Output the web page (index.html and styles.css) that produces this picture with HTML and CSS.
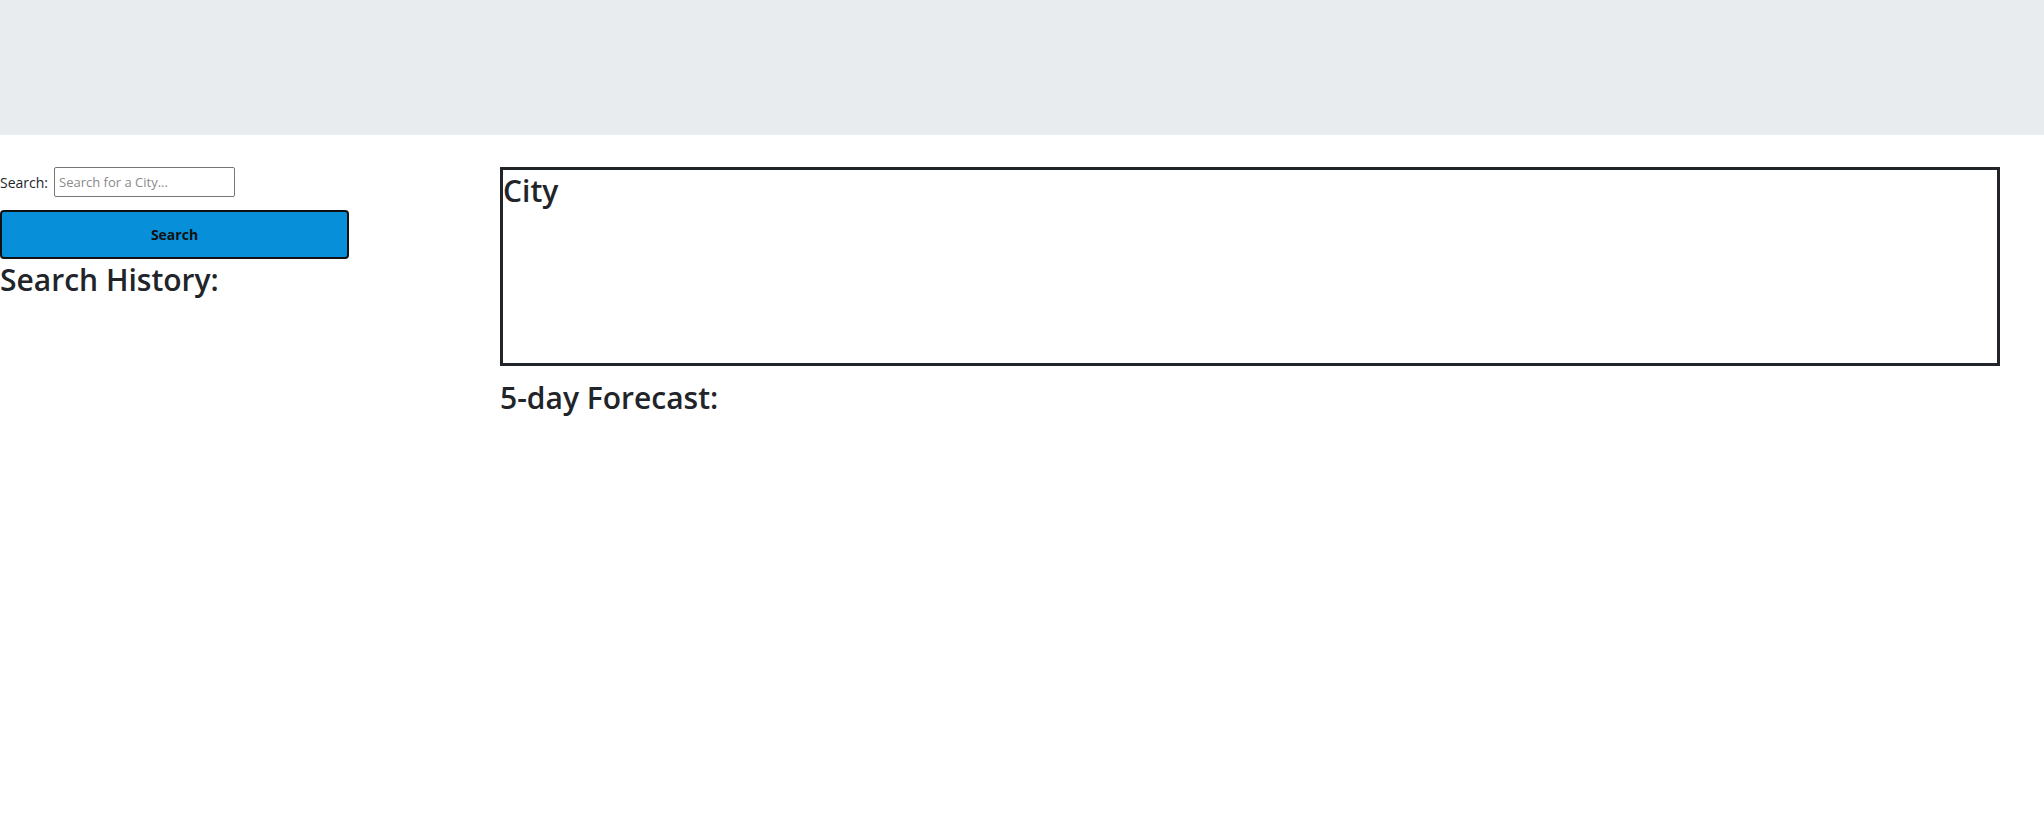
FILE: index.html
```html
<!DOCTYPE html>
<html lang="en">
<head>
<meta charset="utf-8">
<title>Weather Dashboard</title>
<link rel="stylesheet" href="styles.css">
</head>
<body>
<header class="jumbotron"></header>
<main class="layout">
  <aside class="sidebar">
    <div class="search-row">
      <label class="search-label" for="city">Search:</label>
      <input class="search-input" id="city" type="text" placeholder="Search for a City...">
    </div>
    <button class="search-btn" type="button">Search</button>
    <h2 class="heading">Search History:</h2>
  </aside>
  <section class="content">
    <div class="city-box">
      <h2 class="heading city-title">City</h2>
    </div>
    <h3 class="heading forecast">5-day Forecast:</h3>
  </section>
</main>
</body>
</html>
```
FILE: styles.css
```css
* { box-sizing: border-box; }
body {
  margin: 0;
  font-family: "Open Sans", "Noto Sans", sans-serif;
  color: #212529;
  background: #fff;
}
.jumbotron {
  height: 135px;
  background: #e9ecef;
}
.layout {
  display: grid;
  grid-template-columns: 500px 1500px;
  padding-top: 32px;
}
.sidebar {
  display: flex;
  flex-direction: column;
  align-items: flex-start;
}
.search-row {
  display: flex;
  align-items: center;
  gap: 6px;
  height: 30px;
}
.search-label {
  font-size: 14px;
}
.search-input {
  width: 181px;
  height: 30px;
  border: 1px solid #767676;
  border-radius: 2px;
  padding: 0 4px;
  font-family: inherit;
  font-size: 13px;
  color: #212529;
}
.search-input::placeholder { color: #8a8a8a; }
.search-btn {
  margin-top: 13px;
  width: 349px;
  height: 49px;
  background: #078fd9;
  border: 2px solid #111;
  border-radius: 4px;
  font-family: inherit;
  font-weight: 700;
  font-size: 14px;
  color: #111;
}
.heading {
  margin: 0;
  padding-top: 3px;
  font-size: 30px;
  font-weight: 600;
  line-height: 1.2;
}
.city-box {
  height: 199px;
  border: 3px solid #212529;
}
.forecast {
  margin-top: 11px;
}
```
